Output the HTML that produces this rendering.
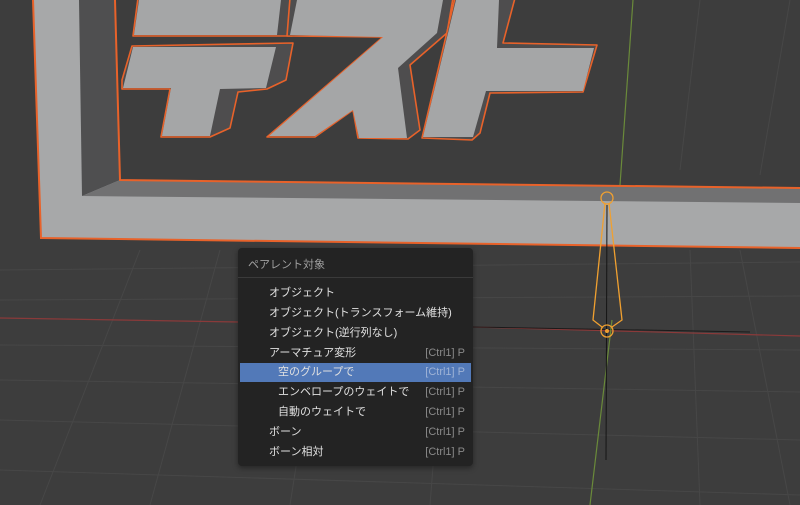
<!DOCTYPE html>
<html><head><meta charset="utf-8"><style>
body{margin:0;width:800px;height:505px;overflow:hidden;background:#3d3d3d;font-family:"Liberation Sans","Noto Sans CJK JP",sans-serif}
svg{position:absolute;left:0;top:0}
.menu{position:absolute;left:238px;top:248px;width:235px;height:218px;background:#232323;border-radius:4px;box-shadow:0 2px 6px rgba(0,0,0,.4)}
.t{position:absolute;left:10px;top:8px;font-size:11px;color:#a0a0a0}
.sep{position:absolute;left:0;right:0;top:29px;height:1px;background:#3a3a3a}
.it{position:absolute;left:2px;width:231px;height:19px;font-size:11px;color:#e0e0e0;line-height:19px}
.it span{position:absolute;left:29px}
.it.s span{left:38px}
.it b{position:absolute;right:6px;font-weight:normal;color:#8a8a8a}
.hl{background:#5279b8}
.hl b{color:#9fb3d6}
</style></head><body>
<svg width="800" height="505">
<g stroke="#474747" stroke-width="1" fill="none">
<path d="M0 270 L800 262 M0 300 L800 296 M0 345 L800 350 M0 380 L800 392 M0 420 L800 440 M0 470 L800 495"/>
<path d="M40 505 L140 250 M150 505 L220 250 M290 505 L330 250 M430 505 L450 250 M700 505 L690 250 M790 505 L740 250 M680 170 L700 0 M760 175 L790 0"/>
</g>
<path d="M0 318 L238 322" stroke="#8a3a3a" stroke-width="1.2"/>
<path d="M473 327 L800 336" stroke="#8a3a3a" stroke-width="1.2"/>
<path d="M473 327 L750 332" stroke="#1a1a1a" stroke-width="1"/>
<path d="M633 0 L620 185 M612 320 L590 505" stroke="#6a8a3a" stroke-width="1.2"/>
<polygon points="33,0 115,0 120,180 800,188 800,248 41,238" fill="#a7a8a9"/>
<polygon points="79,0 115,0 120,180 82,196" fill="#4f4f50"/>
<polygon points="82,196 120,180 800,188 800,203" fill="#717172"/>
<path d="M33 0 L41 238 L800 248" stroke="#e8622a" stroke-width="2" fill="none"/>
<path d="M115 0 L120 180 L800 188" stroke="#e8622a" stroke-width="2" fill="none"/>
<g fill="#4e4d4e" stroke="#e8622a" stroke-width="1.6" stroke-linejoin="round">
<polygon points="138,-2 298,-2 292,36 133,36"/>
<polygon points="132,46 293,43 286,80 267,89 238,92 230,128 210,137 161,137 170,89 122,89 122,80"/>
<polygon points="290,-2 453,-2 447,33 410,65 420,130 408,139 358,138 353,110 315,137 267,137 383,37 287,36"/>
<polygon points="455,-2 515,-2 503,43 597,45 583,92 490,93 480,133 472,140 422,138"/>
</g>
<g fill="#a5a6a7">
<polygon points="139,0 281,0 277,35 134,35"/>
<polygon points="133,47 276,47 266,88 220,89 210,136 162,136 171,88 123,88"/>
<polygon points="297,0 443,0 437,33 398,68 407,138 359,138 353,110 315,136 269,136 383,37 290,35"/>
<polygon points="456,0 499,0 497,48 594,48 583,91 486,91 473,137 423,137"/>
</g>
<path d="M607 205 L606 460" stroke="#151515" stroke-width="1"/>
<g stroke="#f0a030" stroke-width="1.3" fill="none">
<circle cx="607" cy="198" r="6"/>
<path d="M605 203 L593 320 L602 327 M609 203 L622 320 L612 327"/>
<circle cx="607" cy="331" r="6"/>
</g>
<circle cx="607" cy="331" r="2" fill="#f0a030"/>
</svg>
<div class="menu">
<div class="t">ペアレント対象</div>
<div class="sep"></div>
<div class="it" style="top:36px"><span>オブジェクト</span></div>
<div class="it" style="top:56px"><span>オブジェクト(トランスフォーム維持)</span></div>
<div class="it" style="top:76px"><span>オブジェクト(逆行列なし)</span></div>
<div class="it" style="top:96px"><span>アーマチュア変形</span><b>[Ctrl1] P</b></div>
<div class="it s hl" style="top:115px"><span>空のグループで</span><b>[Ctrl1] P</b></div>
<div class="it s" style="top:135px"><span>エンベロープのウェイトで</span><b>[Ctrl1] P</b></div>
<div class="it s" style="top:155px"><span>自動のウェイトで</span><b>[Ctrl1] P</b></div>
<div class="it" style="top:175px"><span>ボーン</span><b>[Ctrl1] P</b></div>
<div class="it" style="top:195px"><span>ボーン相対</span><b>[Ctrl1] P</b></div>
</div>
</body></html>
